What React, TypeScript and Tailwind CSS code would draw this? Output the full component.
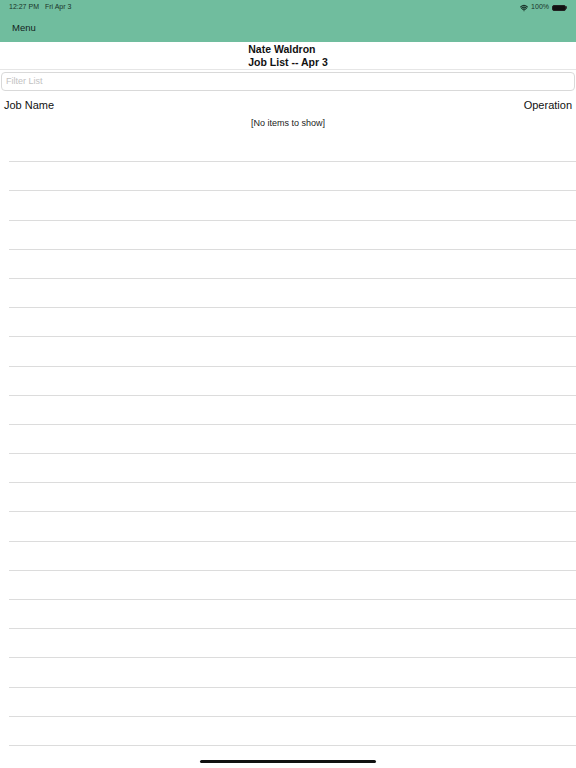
import { Wifi } from 'lucide-react';

const ROWS = Array.from({ length: 21 });

function StatusBar() {
  return (
    <div className="flex h-[14px] items-center justify-between px-[9px] pt-[1px] text-[7px] text-[#1a3329]">
      <div className="flex gap-[6px]">
        <span>12:27 PM</span>
        <span>Fri Apr 3</span>
      </div>
      <div className="flex items-center gap-[3px]">
        <Wifi className="h-[8px] w-[8px]" strokeWidth={3.5} />
        <span>100%</span>
        {/* battery */}
        <div className="flex items-center">
          <div className="h-[6px] w-[14px] rounded-[2px] border border-[#222] bg-[#111] p-[1px]" />
          <div className="h-[3px] w-[1px] rounded-r bg-[#333]" />
        </div>
      </div>
    </div>
  );
}

export default function App() {
  return (
    <div
      className="relative flex h-[768px] w-[576px] flex-col overflow-hidden bg-white text-black"
      style={{ fontFamily: '"Liberation Sans", Arial, sans-serif' }}
    >
      <div className="h-[42px] bg-[#70bd9e]">
        <StatusBar />
        <div className="flex h-[28px] items-center px-[12px] text-[9.5px] text-[#14241d]">Menu</div>
      </div>

      <div className="flex h-[28px] items-center justify-center border-b border-[#e6e6e6] pt-[1px]">
        <div className="flex flex-col text-[10.5px] font-bold leading-[13.5px] text-[#111]">
          <span>Nate Waldron</span>
          <span>Job List -- Apr 3</span>
        </div>
      </div>

      <div className="px-[1px] pt-[2px]">
        <div className="flex h-[19px] items-center rounded-[4px] border border-[#d9d9d9] px-[4px] text-[9px] text-[#c2c2c2]">
          Filter List
        </div>
      </div>

      <div className="flex h-[27px] items-center justify-between px-[4px] pt-[1px] text-[11px] text-[#111]">
        <span>Job Name</span>
        <span>Operation</span>
      </div>

      <div className="flex h-[12px] items-center justify-center text-[9px] text-[#222]">[No items to show]</div>

      <div className="ml-[9px] mt-[3px]">
        {ROWS.map((_, i) => (
          <div key={i} className="h-[29.2px] border-b border-[#dcdcdc]" />
        ))}
      </div>

      <div className="absolute bottom-[5px] left-[200px] h-[3px] w-[176px] rounded-full bg-[#111]" />
    </div>
  );
}
